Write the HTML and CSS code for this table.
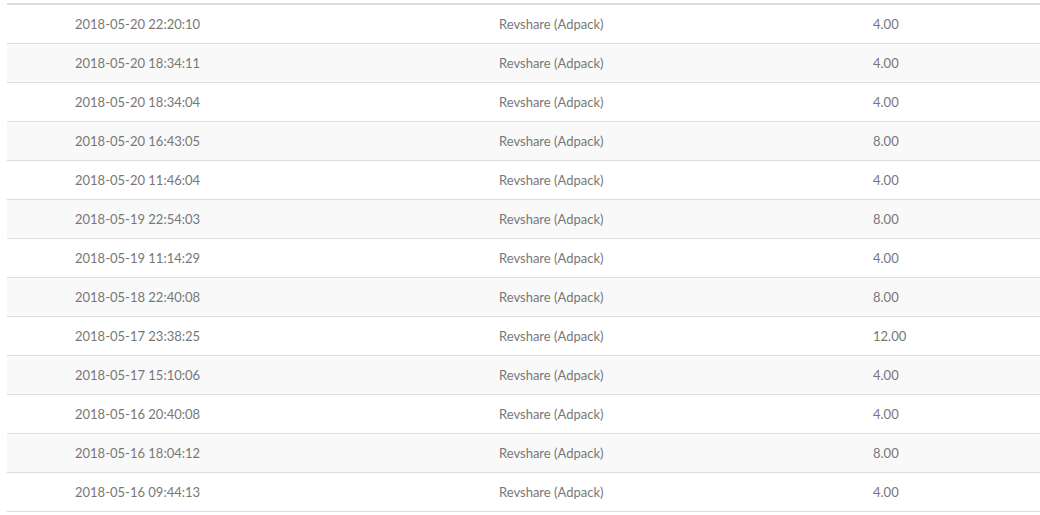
FILE: index.html
```html
<!DOCTYPE html>
<html>
<head>
<meta charset="utf-8">
<link rel="stylesheet" href="styles.css">
</head>
<body>
<div class="wrap">
<table class="tx">
<colgroup><col class="c1"><col class="c2"><col class="c3"></colgroup>
<tbody>
<tr><td>2018-05-20 22:20:10</td><td>Revshare (Adpack)</td><td>4.00</td></tr>
<tr><td>2018-05-20 18:34:11</td><td>Revshare (Adpack)</td><td>4.00</td></tr>
<tr><td>2018-05-20 18:34:04</td><td>Revshare (Adpack)</td><td>4.00</td></tr>
<tr><td>2018-05-20 16:43:05</td><td>Revshare (Adpack)</td><td>8.00</td></tr>
<tr><td>2018-05-20 11:46:04</td><td>Revshare (Adpack)</td><td>4.00</td></tr>
<tr><td>2018-05-19 22:54:03</td><td>Revshare (Adpack)</td><td>8.00</td></tr>
<tr><td>2018-05-19 11:14:29</td><td>Revshare (Adpack)</td><td>4.00</td></tr>
<tr><td>2018-05-18 22:40:08</td><td>Revshare (Adpack)</td><td>8.00</td></tr>
<tr><td>2018-05-17 23:38:25</td><td>Revshare (Adpack)</td><td>12.00</td></tr>
<tr><td>2018-05-17 15:10:06</td><td>Revshare (Adpack)</td><td>4.00</td></tr>
<tr><td>2018-05-16 20:40:08</td><td>Revshare (Adpack)</td><td>4.00</td></tr>
<tr><td>2018-05-16 18:04:12</td><td>Revshare (Adpack)</td><td>8.00</td></tr>
<tr><td>2018-05-16 09:44:13</td><td>Revshare (Adpack)</td><td>4.00</td></tr>
</tbody>
</table>
</div>
</body>
</html>
```
FILE: styles.css
```css
html, body {
  margin: 0;
  padding: 0;
  background: #fff;
}
.wrap {
  padding: 3px 0 0 7px;
}
.tx {
  width: 1033px;
  border-collapse: separate;
  border-spacing: 0;
  table-layout: fixed;
  font-family: Lato, "Open Sans", sans-serif;
  font-size: 13px;
  color: #777;
  border-top: 2px solid #ddd;
}
.c1 { width: 424px; }
.c2 { width: 374px; }
.tx td {
  height: 37px;
  padding: 0 0 1px 68px;
  box-sizing: content-box;
  vertical-align: middle;
  border-top: 1px solid #ddd;
  line-height: 18px;
}
.tx tr:first-child td {
  border-top: none;
}
.tx tr:last-child td {
  border-bottom: 1px solid #ddd;
}
.tx tr:nth-child(even) td {
  background: #f9f9f9;
}
```
